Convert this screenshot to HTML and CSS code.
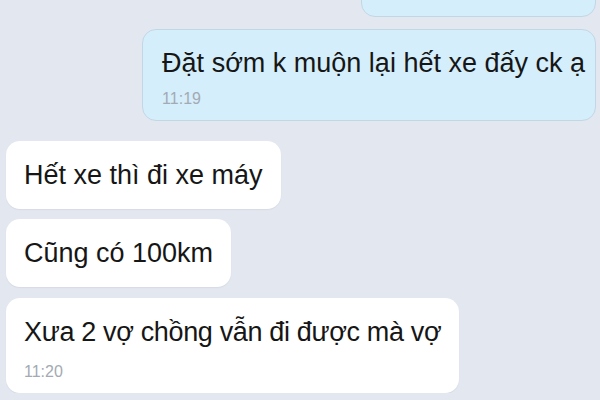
FILE: index.html
```html
<!DOCTYPE html>
<html lang="vi">
<head>
<meta charset="utf-8">
<title>Chat</title>
<link rel="stylesheet" href="styles.css">
</head>
<body>
<div class="chat">
  <div class="msg out msg-cut"></div>
  <div class="msg out gap-12">
    <div class="text">Đặt sớm k muộn lại hết xe đấy ck ạ</div>
    <div class="time">11:19</div>
  </div>
  <div class="msg in gap-20">
    <div class="text">Hết xe thì đi xe máy</div>
  </div>
  <div class="msg in gap-10">
    <div class="text">Cũng có 100km</div>
  </div>
  <div class="msg in gap-11">
    <div class="text tight">Xưa 2 vợ chồng vẫn đi được mà vợ</div>
    <div class="time">11:20</div>
  </div>
</div>
</body>
</html>
```
FILE: styles.css
```css
html, body {
  margin: 0;
  padding: 0;
}
body {
  background: #e3e7f0;
  font-family: "Liberation Sans", Arial, sans-serif;
  color: #161616;
  overflow: hidden;
}
.chat {
  display: flex;
  flex-direction: column;
  padding: 0 4px 0 6px;
  margin-top: -34px;
}
.msg {
  border-radius: 14px;
  padding: 19px 18px 18px;
  font-size: 27px;
  line-height: 31px;
}
.msg:has(.time) {
  padding-bottom: 11px;
}
.out {
  align-self: flex-end;
  background: #d5eefb;
  border: 1px solid #c2d7e4;
  padding: 18px 10px 17px 19px;
}
.out:has(.time) {
  padding-bottom: 11px;
}
.in {
  align-self: flex-start;
  background: #ffffff;
  box-shadow: 0 1px 1px rgba(120, 130, 150, 0.12);
}
.tight {
  letter-spacing: -0.35px;
}
.msg-cut {
  width: 204px;
  height: 14px;
}
.time {
  margin-top: 10px;
  font-size: 16px;
  line-height: 20px;
  color: #a3aab3;
}
.in .time {
  margin-top: 14px;
}
.gap-10 { margin-top: 10px; }
.gap-11 { margin-top: 11px; }
.gap-12 { margin-top: 12px; }
.gap-20 { margin-top: 20px; }
```
